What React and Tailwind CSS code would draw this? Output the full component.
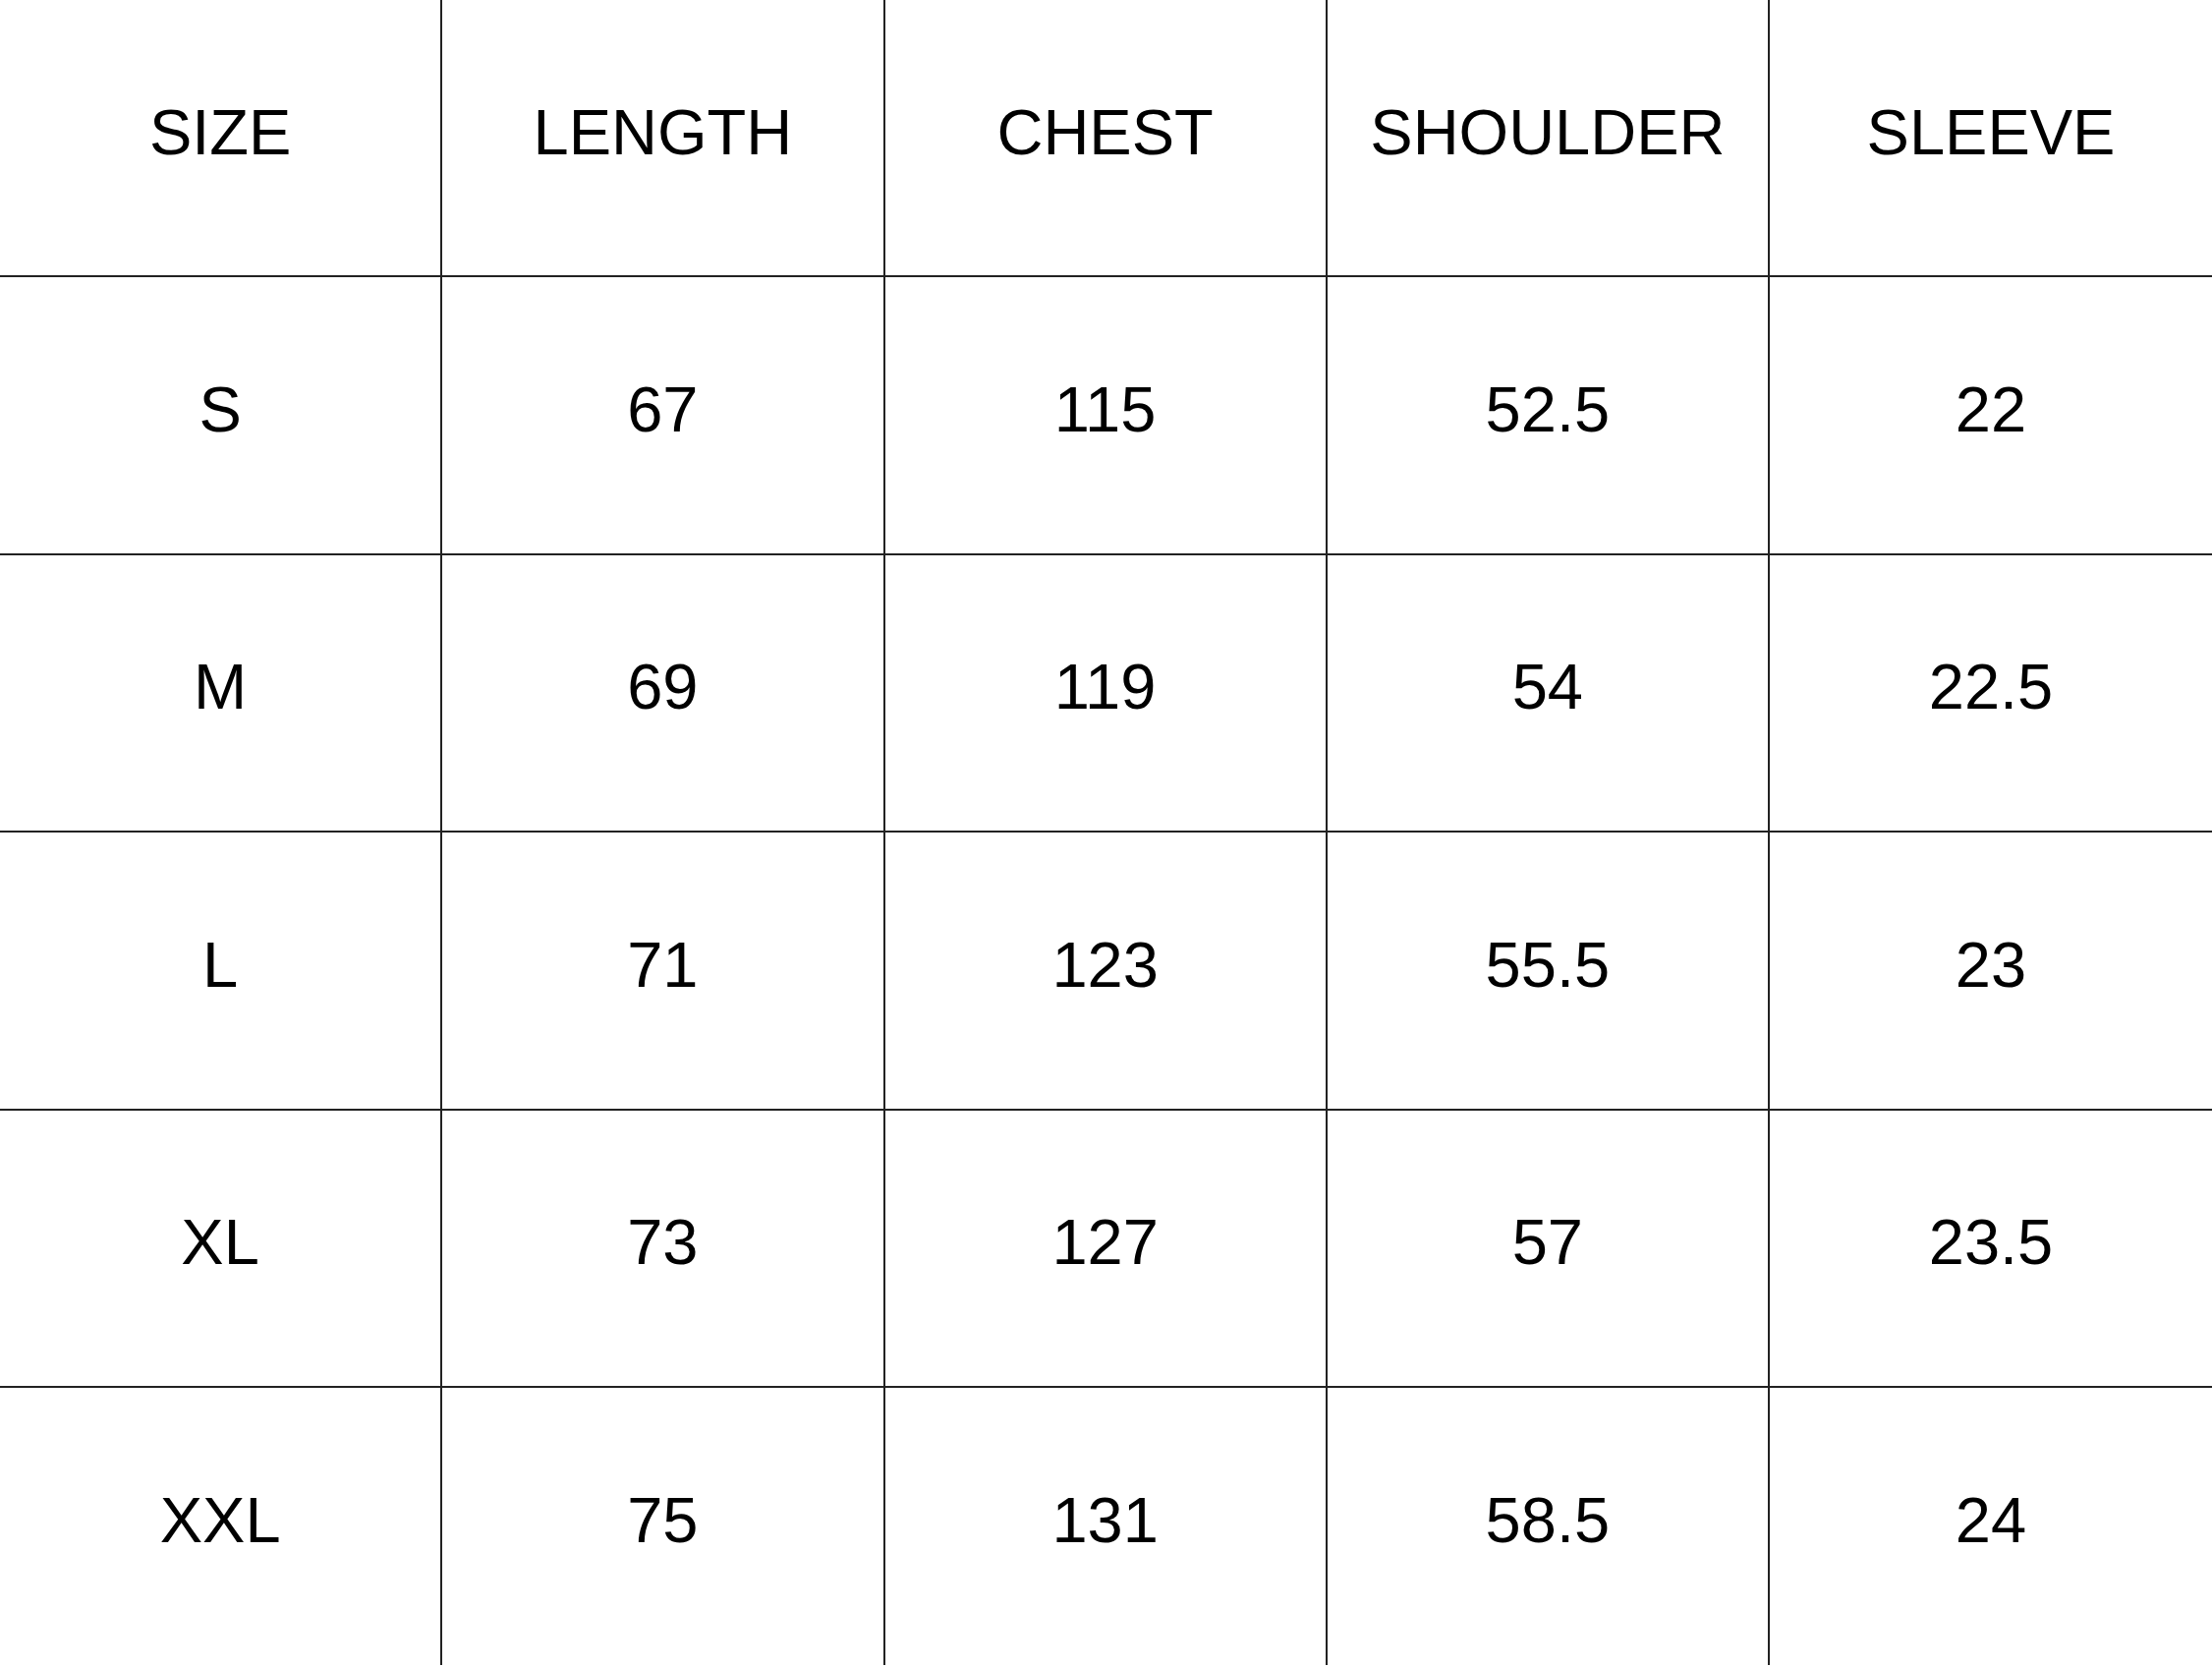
export default function App() {
  const header = ["SIZE", "LENGTH", "CHEST", "SHOULDER", "SLEEVE"];
  const rows = [
    ["S", "67", "115", "52.5", "22"],
    ["M", "69", "119", "54", "22.5"],
    ["L", "71", "123", "55.5", "23"],
    ["XL", "73", "127", "57", "23.5"],
    ["XXL", "75", "131", "58.5", "24"],
  ];
  const all = [header, ...rows];
  return (
    <div
      className="w-[2251px] h-[1696px] bg-white text-black overflow-hidden"
      style={{ fontFamily: '"Liberation Sans", Arial, sans-serif' }}
    >
      <div className="flex flex-col">
        {all.map((r, ri) => (
          <div
            key={ri}
            className={
              ri === all.length - 1
                ? "flex h-[282px]"
                : "flex h-[282.4px] border-b-2 border-[#222]"
            }
          >
            {r.map((c, ci) => (
              <div
                key={ci}
                className={
                  ci === r.length - 1
                    ? "flex-1 flex items-center justify-center text-[65px] leading-none pb-[12px]"
                    : "w-[450.25px] shrink-0 flex items-center justify-center text-[65px] leading-none pb-[12px] border-r-2 border-[#222]"
                }
              >
                {c}
              </div>
            ))}
          </div>
        ))}
      </div>
    </div>
  );
}
